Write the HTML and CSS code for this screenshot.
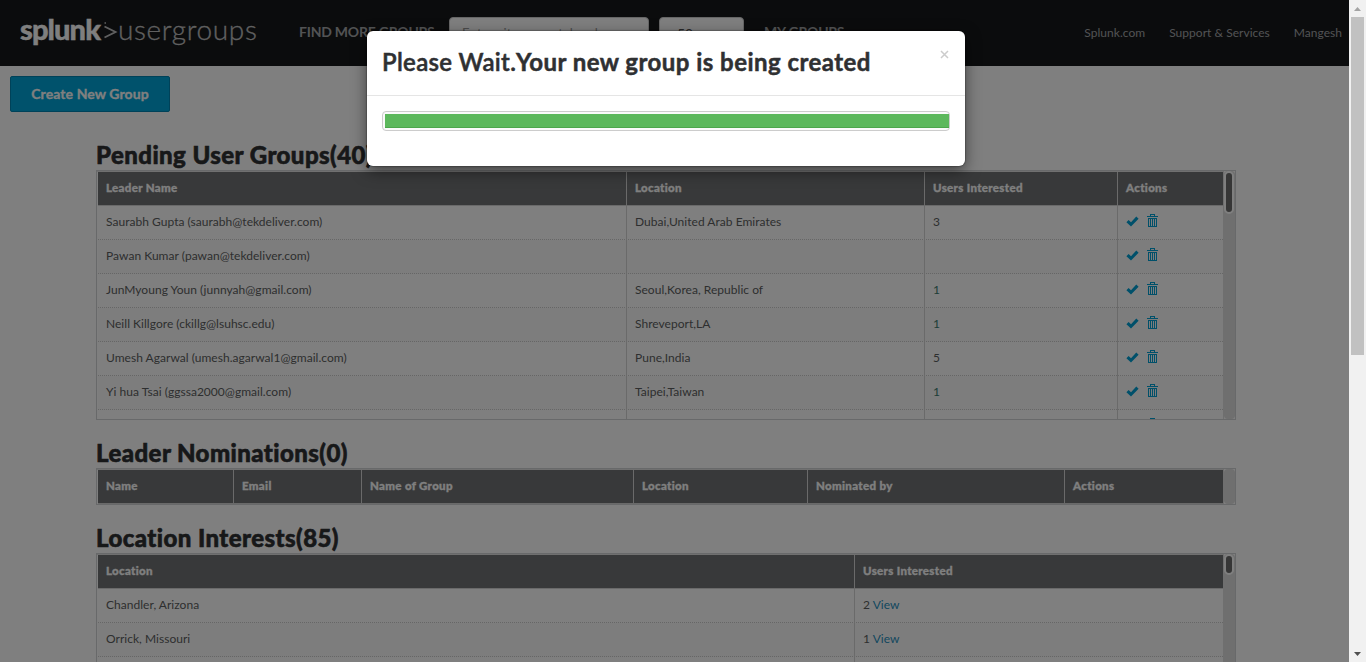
FILE: index.html
```html
<!DOCTYPE html>
<html lang="en">
<head>
<meta charset="utf-8">
<title>Splunk User Groups</title>
<link rel="stylesheet" href="styles.css">
</head>
<body>
<svg class="defs" width="0" height="0">
  <symbol id="check" viewBox="0 0 13 11"><path d="M0.4 6.2 2.6 3.9 5 6.2 10.3 0.6 12.6 2.8 5 10.4Z"/></symbol>
  <symbol id="trash" viewBox="0 0 11 14"><path d="M0 2h11v1H0zM3 2V0h5v2H7V1H4v1zM1 4h9v9H9V5H2v8H1zM1 12h9v1H1zM3 5h1v7H3zM5 5h1v7H5zM7 5h1v7H7z"/></symbol>
</svg>
<div class="window">
  <div class="page">
    <header class="nav">
      <div class="logo"><b>splunk</b><svg class="chev" width="15" height="20" viewBox="0 0 15 20"><path d="M1.5 5.5 12.5 11 1.5 16.5" fill="none" stroke="currentColor" stroke-width="1.9"/><path d="M1.5 1.2H3v1.5H1.500z" fill="currentColor"/></svg><span>usergroups</span></div>
      <div class="find">FIND MORE GROUPS</div>
      <div class="input city">Enter city or postal code</div>
      <div class="input num">50</div>
      <div class="my">MY GROUPS</div>
      <nav class="links"><a class="l1">Splunk.com</a><a class="l2">Support &amp; Services</a><a class="l3">Mangesh</a></nav>
    </header>
    <main>
      <button class="create">Create New Group</button>
      <section class="block pending">
        <h2>Pending User Groups(40)</h2>
        <div class="box">
          <div class="grid">
            <div class="row head"><div>Leader Name</div><div>Location</div><div>Users Interested</div><div>Actions</div></div>
            <div class="row"><div>Saurabh Gupta (saurabh@tekdeliver.com)</div><div>Dubai,United Arab Emirates</div><div>3</div><div class="act"><svg class="ck"><use href="#check"/></svg><svg class="tr"><use href="#trash"/></svg></div></div>
            <div class="row"><div>Pawan Kumar (pawan@tekdeliver.com)</div><div></div><div></div><div class="act"><svg class="ck"><use href="#check"/></svg><svg class="tr"><use href="#trash"/></svg></div></div>
            <div class="row"><div>JunMyoung Youn (junnyah@gmail.com)</div><div>Seoul,Korea, Republic of</div><div class="green">1</div><div class="act"><svg class="ck"><use href="#check"/></svg><svg class="tr"><use href="#trash"/></svg></div></div>
            <div class="row"><div>Neill Killgore (ckillg@lsuhsc.edu)</div><div>Shreveport,LA</div><div class="green">1</div><div class="act"><svg class="ck"><use href="#check"/></svg><svg class="tr"><use href="#trash"/></svg></div></div>
            <div class="row"><div>Umesh Agarwal (umesh.agarwal1@gmail.com)</div><div>Pune,India</div><div>5</div><div class="act"><svg class="ck"><use href="#check"/></svg><svg class="tr"><use href="#trash"/></svg></div></div>
            <div class="row"><div>Yi hua Tsai (ggssa2000@gmail.com)</div><div>Taipei,Taiwan</div><div class="green">1</div><div class="act"><svg class="ck"><use href="#check"/></svg><svg class="tr"><use href="#trash"/></svg></div></div>
            <div class="row"><div></div><div></div><div></div><div class="act"><svg class="ck"><use href="#check"/></svg><svg class="tr"><use href="#trash"/></svg></div></div>
          </div>
          <div class="rail"><div class="track"><i class="thumb"></i></div></div>
        </div>
      </section>
      <section class="block nominations">
        <h2>Leader Nominations(0)</h2>
        <div class="box">
          <div class="grid">
            <div class="row head"><div>Name</div><div>Email</div><div>Name of Group</div><div>Location</div><div>Nominated by</div><div>Actions</div></div>
          </div>
          <div class="rail"><div class="track"></div></div>
        </div>
      </section>
      <section class="block interests">
        <h2>Location Interests(85)</h2>
        <div class="box">
          <div class="grid">
            <div class="row head"><div>Location</div><div>Users Interested</div></div>
            <div class="row"><div>Chandler, Arizona</div><div>2 <a>View</a></div></div>
            <div class="row"><div>Orrick, Missouri</div><div>1 <a>View</a></div></div>
            <div class="row"><div></div><div></div></div>
          </div>
          <div class="rail"><div class="track"><i class="thumb"></i></div></div>
        </div>
      </section>
    </main>
    <div class="backdrop"></div>
    <div class="modal">
      <div class="modal-head"><h3><span>Please Wait.</span><b>Your new group is being created</b></h3>
        <svg class="close" width="9" height="9" viewBox="0 0 9 9"><path d="M1 1l7 7M8 1L1 8" stroke="#ccc" stroke-width="1.5"/></svg></div>
      <div class="modal-body"><div class="progress"><div class="bar"></div></div></div>
    </div>
  </div>
  <div class="scrollbar">
    <svg width="7" height="4" viewBox="0 0 7 4"><path d="M0 4 3.5 0 7 4z" fill="#a3a3a3"/></svg>
    <div class="grip"></div>
    <svg class="down" width="7" height="4" viewBox="0 0 7 4"><path d="M0 0h7L3.5 4z" fill="#505050"/></svg>
  </div>
</div>
</body>
</html>
```
FILE: styles.css
```css
* { box-sizing: border-box; }
body { margin: 0; font-family: Lato, "Liberation Sans", sans-serif; font-size: 12px; color: #5c5e60; overflow: hidden; }
.defs { position: absolute; }
.window { display: flex; height: 662px; }
.page { position: relative; width: 1349px; height: 662px; overflow: hidden; background: #fff; }
.nav { display: flex; height: 66px; background: #16181b; color: #a4a6a8; white-space: nowrap; }
.logo { display: flex; width: 279px; padding: 12px 0 0 20px; height: 60px; line-height: 34px; flex: none; }
.logo b { width: 83px; font-size: 29px; font-weight: 900; color: #fff; letter-spacing: -0.9px; -webkit-text-stroke: 0.4px #fff; }
.chev { width: 15px; margin-top: 9px; color: #c0c0c0; flex: none; }
.logo span { font-size: 28px; font-weight: 300; color: #c0c0c0; letter-spacing: 0.65px; -webkit-text-stroke: 0.3px #c0c0c0; }
.find, .my { padding-top: 24px; height: 50px; line-height: 16px; font-size: 14px; font-weight: 700; letter-spacing: -0.22px; flex: none; }
.find { width: 150px; margin-left: 20px; }
.my { margin-left: 20px; }
.input { height: 35px; margin-top: 17px; border: 1px solid #ccc; border-radius: 4px; background: #fff; line-height: 31px; font-size: 13px; flex: none; color: #999; }
.city { width: 200px; padding-left: 12px; letter-spacing: 0.2px; }
.num { width: 85px; margin-left: 10px; padding-left: 17px; color: #555; font-size: 14px; }
.links { display: flex; margin-left: auto; padding: 25px 7px 0 0; gap: 24px; line-height: 16px; font-size: 12px; letter-spacing: 0.03px; }
.create { display: block; margin: 10px 0 0 10px; width: 160px; height: 36px; padding: 0; border: 1px solid #0085b2; border-radius: 2px; background: #00a5d8; color: #fff; font: 700 14px/34px Lato, sans-serif; letter-spacing: 0.1px; -webkit-text-stroke: 0.3px #fff; }
.block { width: 1140px; margin-left: 96px; }
h2 { margin: 0; height: 30px; font-size: 24px; line-height: 30px; font-weight: 900; letter-spacing: 0.43px; -webkit-text-stroke: 0.6px #2f3032; color: #2f3032; white-space: nowrap; }
.pending { margin-top: 28px; }
.nominations { margin-top: 18px; }
.interests { margin-top: 18px; }
.box { display: flex; border: 1px solid #d0d3d4; overflow: hidden; }
.pending .box { height: 250px; }
.nominations .box { height: 37px; }
.interests .box { height: 160px; }
.grid { width: 1127px; padding: 1px 0 0 1px; background: linear-gradient(#e0e0e0, #e0e0e0) 0 0 / 100% 1px no-repeat; border-right: 1px solid #dfdfdf; flex: none; }
.row { display: grid; height: 34px; border-bottom: 1px dotted #ccc; }
.row:nth-child(odd) { background: #fbfbfb; }
.pending .row { grid-template-columns: 529px 298px 193px 1fr; }
.nominations .row { grid-template-columns: 136px 128px 272px 174px 257px 1fr; }
.interests .row { grid-template-columns: 757px 1fr; }
.row > div { height: 34px; padding-left: 8px; line-height: 31px; letter-spacing: 0.03px; border-right: 1px solid #d4d4d4; white-space: nowrap; }
.row > div:last-child { border-right: 0; }
.row.head { background: #707274; border-bottom: 1px solid #d4d4d4; color: #fff; font-weight: 900; font-size: 11.5px; -webkit-text-stroke: 0.3px #fff; }
.row.head > div { letter-spacing: 0.33px; }
.green { color: #3c7a70; }
a { color: #288fbd; }
.links a { color: inherit; }
.act { display: flex; color: #009cd3; fill: #00a0d5; }
.ck { width: 13px; height: 11px; margin: 10px 8px 0 0; }
.tr { width: 11px; height: 14px; margin-top: 8px; shape-rendering: crispEdges; }
.rail { width: 11px; background: #fff; }
.track { height: 100%; background: #dedede; border-radius: 4px; }
.thumb { display: block; width: 10px; height: 43px; border: 2px solid #fff; border-radius: 5px; background: #6c6c6c; }
.interests .thumb { height: 21px; }
.backdrop { position: absolute; inset: 0; background: rgba(0, 0, 0, .5); }
.modal { position: absolute; left: 367px; top: 31px; width: 598px; height: 135px; background: #fff; border-radius: 6px; box-shadow: 0 5px 15px rgba(0, 0, 0, .5), 0 0 1px 1px rgba(0, 0, 0, .2); }
.modal-head { display: flex; justify-content: space-between; height: 65px; padding: 15px 16px 0 15px; border-bottom: 1px solid #e5e5e5; }
h3 { display: flex; margin: 0; font-size: 24px; line-height: 32px; color: #2f3032; white-space: nowrap; }
h3 span { width: 134px; font-weight: 600; letter-spacing: 0.33px; -webkit-text-stroke: 0.5px #2f3032; }
h3 b { font-weight: 700; letter-spacing: 0.46px; -webkit-text-stroke: 0.5px #2f3032; }
.close { margin-top: 4px; }
.modal-body { padding: 15px; }
.progress { height: 20px; padding: 2px 0 2px 2px; border: 1px solid #ccc; border-radius: 4px; background: #fafafa; }
.bar { height: 14px; background: #5cb85c; border-bottom: 1px solid #4ca64c; }
.scrollbar { display: flex; flex-direction: column; align-items: center; width: 17px; padding: 7px 0 6px; background: #f1f1f1; }
.grip { width: 13px; height: 338px; margin-top: 6px; background: #c1c1c1; }
.down { margin-top: auto; }
```
